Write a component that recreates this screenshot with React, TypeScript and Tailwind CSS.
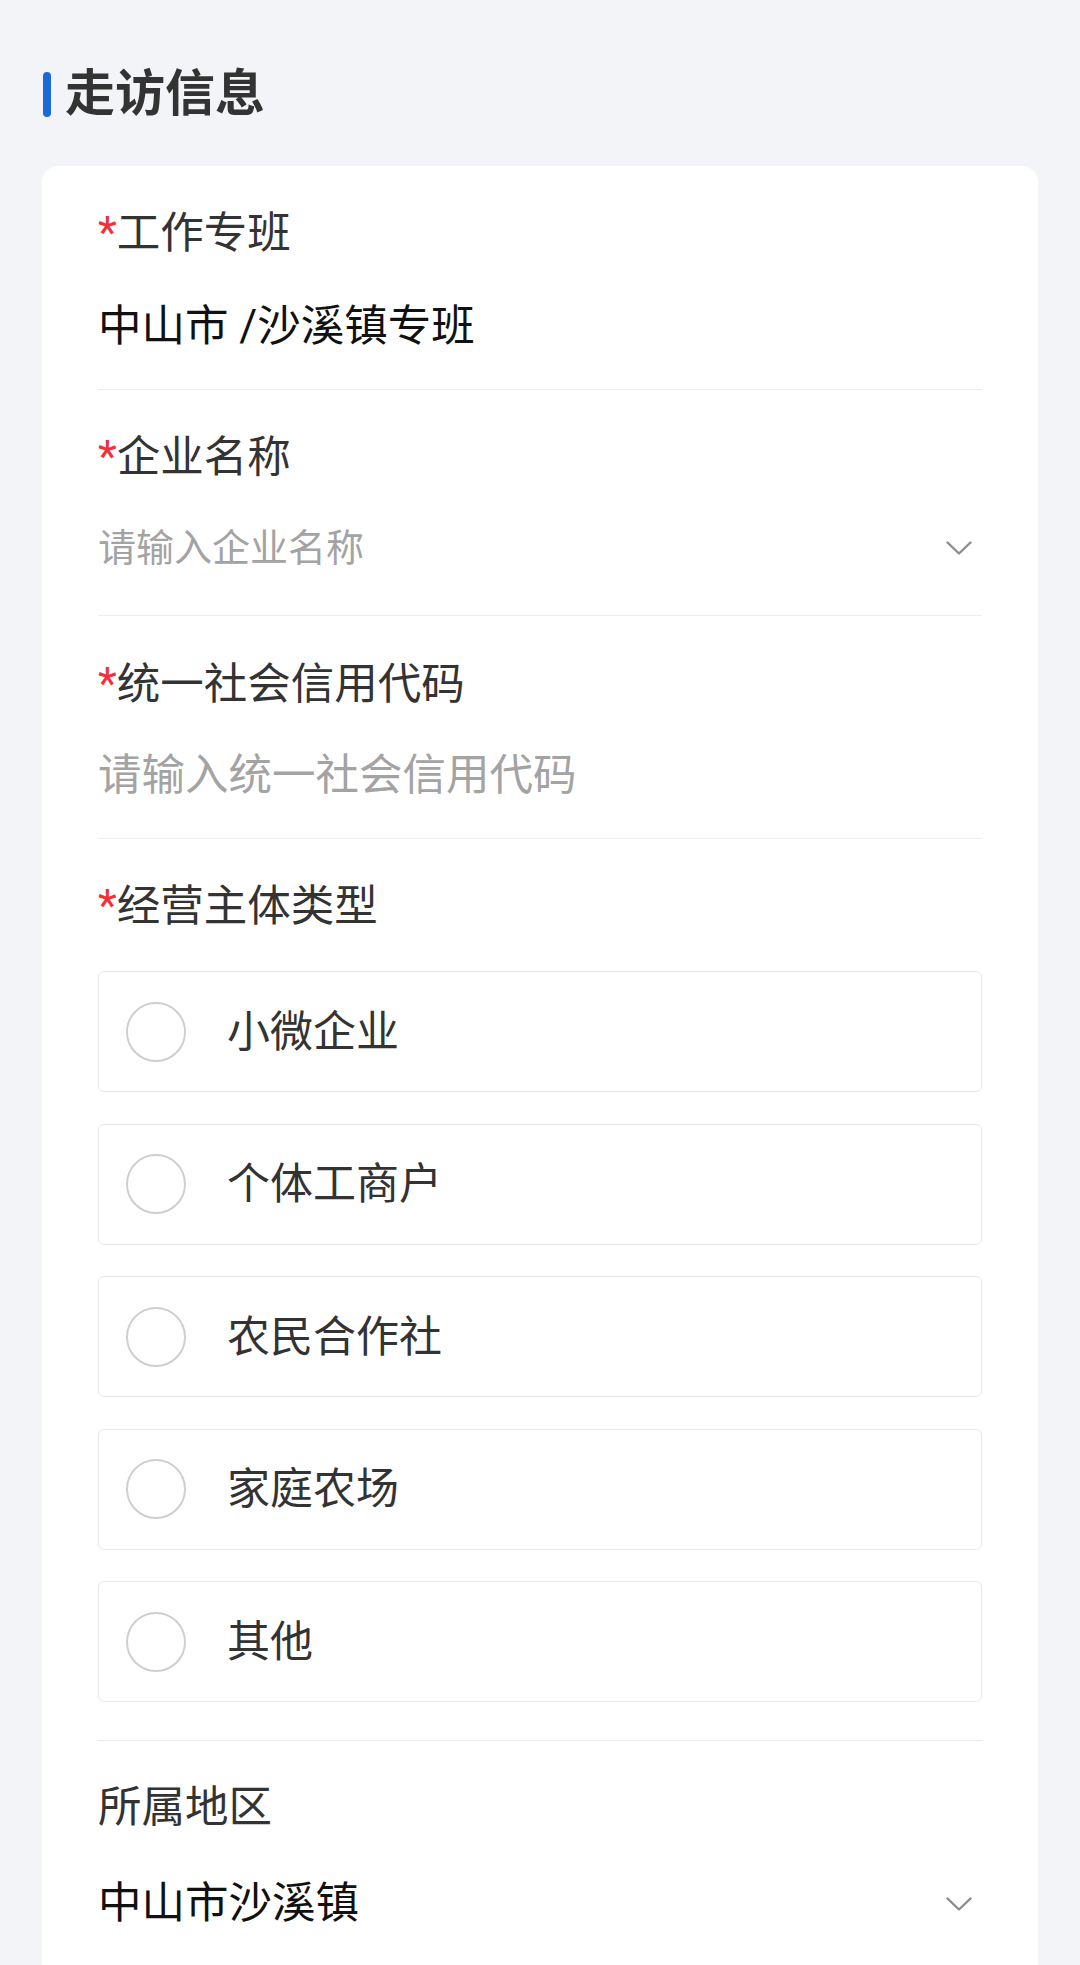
import React from "react";

const options = ["小微企业", "个体工商户", "农民合作社", "家庭农场", "其他"];

const Chevron = () => (
  <svg width="26" height="14" viewBox="0 0 26 14" className="mr-[10px] shrink-0">
    <polyline
      points="1.5,1.5 13,12.5 24.5,1.5"
      fill="none"
      stroke="#8c8c8c"
      strokeWidth="2.4"
      strokeLinecap="round"
      strokeLinejoin="round"
    />
  </svg>
);

const Label = ({ text, required }: { text: string; required?: boolean }) => (
  <div className="leading-[56px] text-[43.5px] text-[#333333]">
    {required && <span className="text-[#f0313a]">*</span>}
    {text}
  </div>
);

const RadioOption = ({ label }: { label: string }) => (
  <div className="h-[121px] border border-[#e8e8e8] rounded-[6px] flex items-center pl-[27px]">
    <div className="w-[60px] h-[60px] rounded-full border-2 border-[#cfcfcf] shrink-0" />
    <span className="ml-[41px] text-[43px] leading-[56px] text-[#333333]">{label}</span>
  </div>
);

export default function App() {
  return (
    <div className="h-[1965px] overflow-hidden bg-[#f3f4f8] flex flex-col font-['Roboto','Noto_Sans_CJK_SC',sans-serif]">
      {/* section title */}
      <div className="flex items-center pt-[66px] pb-[44px] pl-[43px]">
        <div className="w-[8px] h-[45px] rounded-full bg-[#1a6ad8]" />
        <h2 className="ml-[14px] text-[50px] leading-[56px] font-bold text-[#333333]">走访信息</h2>
      </div>

      <div className="flex-1 mx-[42px] bg-white rounded-t-[16px] px-[56px]">
        {/* 工作专班 */}
        <div className="pt-[40px] pb-[34px] border-b border-[#ebedf0]">
          <Label text="工作专班" required />
          <div className="mt-[37px] leading-[56px] text-[43.5px] text-[#111111]">中山市 /沙溪镇专班</div>
        </div>

        {/* 企业名称 */}
        <div className="pt-[40px] pb-[39px] border-b border-[#ebedf0]">
          <Label text="企业名称" required />
          <div className="mt-[34px] h-[56px] flex items-center justify-between">
            <span className="text-[38px] leading-[56px] text-[#a3a3a3]">请输入企业名称</span>
            <Chevron />
          </div>
        </div>

        {/* 统一社会信用代码 */}
        <div className="pt-[41px] pb-[34px] border-b border-[#ebedf0]">
          <Label text="统一社会信用代码" required />
          <div className="mt-[35px] leading-[56px] text-[43.5px] text-[#a3a3a3]">请输入统一社会信用代码</div>
        </div>

        {/* 经营主体类型 */}
        <div className="pt-[40px] pb-[38px] border-b border-[#ebedf0]">
          <Label text="经营主体类型" required />
          <div className="mt-[36px] flex flex-col gap-[31.5px]">
            {options.map((o) => (
              <RadioOption key={o} label={o} />
            ))}
          </div>
        </div>

        {/* 所属地区 */}
        <div className="pt-[39px]">
          <Label text="所属地区" />
          <div className="mt-[40px] h-[56px] flex items-center justify-between">
            <span className="text-[43.5px] leading-[56px] text-[#111111]">中山市沙溪镇</span>
            <Chevron />
          </div>
        </div>
      </div>
    </div>
  );
}
